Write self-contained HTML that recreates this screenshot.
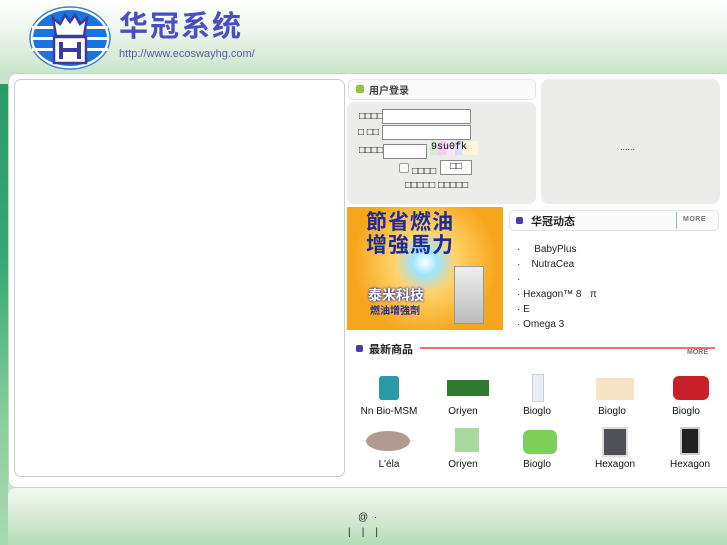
<!DOCTYPE html>
<html><head><meta charset="utf-8"><style>
*{margin:0;padding:0;box-sizing:border-box}
body{width:727px;height:545px;overflow:hidden;position:relative;font-family:"Liberation Sans","Noto Sans CJK SC",sans-serif;background:linear-gradient(to bottom,#ffffff 0,#eef6ec 30px,#c9e6cc 72px);}
.abs{position:absolute}
.cn{font-family:"Liberation Sans","Noto Sans CJK SC",sans-serif}
.lab{position:absolute;font-size:10px;color:#111;text-align:center;width:70px}
</style></head><body>
<div class="abs" style="left:0;top:84px;width:8px;height:461px;background:linear-gradient(to bottom,#2a9a68 0,#3aa776 180px,#8ccf9e 340px,#a8dab0 461px)"></div>
<svg class="abs" style="left:29px;top:6px" width="82" height="64" viewBox="0 0 82 64">
<ellipse cx="41" cy="32" rx="40" ry="31" fill="#fff" stroke="#3b7fe0" stroke-width="1.5"/>
<ellipse cx="41" cy="32" rx="37" ry="28" fill="#1a74e0"/>
<g fill="#fff"><rect x="3" y="20" width="76" height="3"/><rect x="3" y="31" width="76" height="3"/><rect x="3" y="42" width="76" height="3"/></g>
<path d="M24 12 L31 18 L36 9 L41 16 L46 9 L51 18 L58 12 L55 30 L27 30 Z" fill="#fff" stroke="#3a3aa0" stroke-width="2.5"/>
<rect x="25" y="31" width="32" height="26" fill="#fff" stroke="#3a3aa0" stroke-width="2.5"/>
<path d="M32 36v17M50 36v17M32 44h18" stroke="#3a3aa0" stroke-width="4"/>
</svg>
<div class="abs cn" style="left:119px;top:9px;font-size:29px;color:#4a4fc0;letter-spacing:2px;line-height:36px;font-weight:bold">华冠系统</div>
<div class="abs" style="left:119px;top:48px;font-size:11px;color:#5a5ab0">http://www.ecoswayhg.com/</div>
<div class="abs" style="left:8px;top:73px;width:722px;height:415px;background:#fff;border-radius:8px 0 0 8px;border:1px solid #b9dcbc"></div>
<div class="abs" style="left:14px;top:79px;width:331px;height:398px;border:1px solid #ccc;border-radius:7px;background:#fff"></div>
<div class="abs" style="left:348px;top:79px;width:188px;height:21px;border:1px solid #e6e6e6;border-radius:5px;background:#fafafa"></div>
<div class="abs" style="left:356px;top:85px;width:8px;height:8px;background:#8bc53f;border-radius:2px"></div>
<div class="abs cn" style="left:369px;top:82px;font-size:10px;color:#444;font-weight:bold">用户登录</div>
<div class="abs" style="left:347px;top:102px;width:189px;height:102px;background:#ececea;border-radius:7px"></div>
<div class="abs" style="left:359px;top:111px;font-size:10px;font-weight:bold">□□□□</div>
<div class="abs" style="left:382px;top:109px;width:89px;height:15px;border:1px solid #888;background:#fff"></div>
<div class="abs" style="left:358px;top:127px;font-size:10px;font-weight:bold">□ □□</div>
<div class="abs" style="left:382px;top:125px;width:89px;height:15px;border:1px solid #888;background:#fff"></div>
<div class="abs" style="left:359px;top:145px;font-size:10px;font-weight:bold">□□□□</div>
<div class="abs" style="left:383px;top:144px;width:44px;height:15px;border:1px solid #888;background:#fff"></div>
<div class="abs" style="left:430px;top:141px;width:48px;height:14px;font-family:'Liberation Mono',monospace;font-size:10px;background:linear-gradient(to right,#d6eed6 0 16%,#f3d0ee 16% 34%,#fbe7f6 34% 52%,#d8def7 52% 68%,#fdf3d8 68% 100%);line-height:14px;padding-left:1px;white-space:nowrap;overflow:hidden">9su0fk</div>
<div class="abs" style="left:399px;top:163px;width:10px;height:10px;border:1px solid #999;background:#f6f6f6;border-radius:2px"></div>
<div class="abs" style="left:412px;top:166px;font-size:10px;font-weight:bold">□□□□</div>
<div class="abs" style="left:440px;top:160px;width:32px;height:15px;border:1px solid #888;background:#fff;font-size:10px;text-align:center">□□</div>
<div class="abs" style="left:405px;top:180px;font-size:10px;font-weight:bold">□□□□□ □□□□□</div>
<div class="abs" style="left:541px;top:79px;width:179px;height:125px;background:#ececea;border-radius:8px"></div>
<div class="abs" style="left:620px;top:142px;font-size:9px;color:#444">......</div>
<div class="abs" style="left:347px;top:207px;width:156px;height:123px;background:radial-gradient(circle at 50% 45%,#fff 0,#9fe4ff 12%,#ffd36a 30%,#f6a61c 70%)"></div>
<div class="abs cn" style="left:366px;top:211px;font-size:21px;color:#1d2a9a;font-weight:bold;letter-spacing:1px;line-height:23px">節省燃油<br>增強馬力</div>
<div class="abs cn" style="left:368px;top:285px;font-size:14px;color:#fff;font-weight:bold;text-shadow:0 0 2px #1d2a9a,0 0 2px #1d2a9a">泰米科技</div>
<div class="abs cn" style="left:370px;top:302px;font-size:10px;color:#1d2a9a;font-weight:bold">燃油增強劑</div>
<div class="abs" style="left:454px;top:266px;width:30px;height:58px;background:linear-gradient(#eee,#bbb);border:1px solid #999"></div>
<div class="abs" style="left:509px;top:210px;width:210px;height:21px;border:1px solid #e4e4e4;border-radius:5px;background:#fafafa"></div>
<div class="abs" style="left:516px;top:217px;width:7px;height:7px;background:#4a3cae;border-radius:2px"></div>
<div class="abs cn" style="left:531px;top:213px;font-size:11px;font-weight:bold;color:#222">华冠动态</div>
<div class="abs" style="left:676px;top:212px;width:1px;height:17px;background:#7ac79a"></div>
<div class="abs" style="left:683px;top:216px;font-size:7px;color:#777;font-weight:bold;letter-spacing:0.5px">MORE</div>
<div class="abs" style="left:517px;top:242px;font-size:10px;color:#222;line-height:15px;white-space:pre">·     BabyPlus
·    NutraCea
·
· Hexagon™ 8   π
· E
· Omega 3</div>
<div class="abs" style="left:356px;top:345px;width:7px;height:7px;background:#4a3cae;border-radius:2px"></div>
<div class="abs cn" style="left:369px;top:341px;font-size:11px;font-weight:bold;color:#222">最新商品</div>
<div class="abs" style="left:420px;top:347px;width:295px;height:2px;background:#f07070"></div>
<div class="abs" style="left:687px;top:349px;font-size:7px;color:#777;font-weight:bold">MORE</div>
<div class="abs" style="left:379px;top:376px;width:20px;height:24px;background:#2a9aa8;border-radius:3px"></div>
<div class="abs" style="left:447px;top:380px;width:42px;height:16px;background:#2d7a2d"></div>
<div class="abs" style="left:532px;top:374px;width:12px;height:28px;background:#e8eef4;border:1px solid #ccd"></div>
<div class="abs" style="left:596px;top:378px;width:38px;height:22px;background:#f6e4c4"></div>
<div class="abs" style="left:673px;top:376px;width:36px;height:24px;background:#c8202a;border-radius:6px"></div>
<div class="abs" style="left:366px;top:431px;width:44px;height:20px;background:#b09a90;border-radius:50%"></div>
<div class="abs" style="left:455px;top:428px;width:24px;height:24px;background:#a8d8a0"></div>
<div class="abs" style="left:523px;top:430px;width:34px;height:24px;background:#7cd05a;border-radius:6px"></div>
<div class="abs" style="left:602px;top:427px;width:26px;height:30px;background:#505058;border:2px solid #ddd"></div>
<div class="abs" style="left:680px;top:427px;width:20px;height:28px;background:#222;border:2px solid #ccc"></div>
<div class="lab" style="left:354px;top:406px">Nn Bio-MSM</div>
<div class="lab" style="left:428px;top:406px">Oriyen</div>
<div class="lab" style="left:502px;top:406px">Bioglo</div>
<div class="lab" style="left:577px;top:406px">Bioglo</div>
<div class="lab" style="left:651px;top:406px">Bioglo</div>
<div class="lab" style="left:354px;top:459px">L'éla</div>
<div class="lab" style="left:428px;top:459px">Oriyen</div>
<div class="lab" style="left:502px;top:459px">Bioglo</div>
<div class="lab" style="left:580px;top:459px">Hexagon</div>
<div class="lab" style="left:655px;top:459px">Hexagon</div>
<div class="abs" style="left:8px;top:488px;width:719px;height:57px;border-radius:8px 0 0 0;background:linear-gradient(to bottom,#f2f8f0 0,#e2f0e0 18px,#b4dcb6 57px)"></div>
<div class="abs" style="left:358px;top:512px;font-size:10px;color:#222">@ &nbsp;·</div>
<div class="abs" style="left:348px;top:527px;font-size:10px;color:#222;white-space:pre">|    |    |</div>
</body></html>
